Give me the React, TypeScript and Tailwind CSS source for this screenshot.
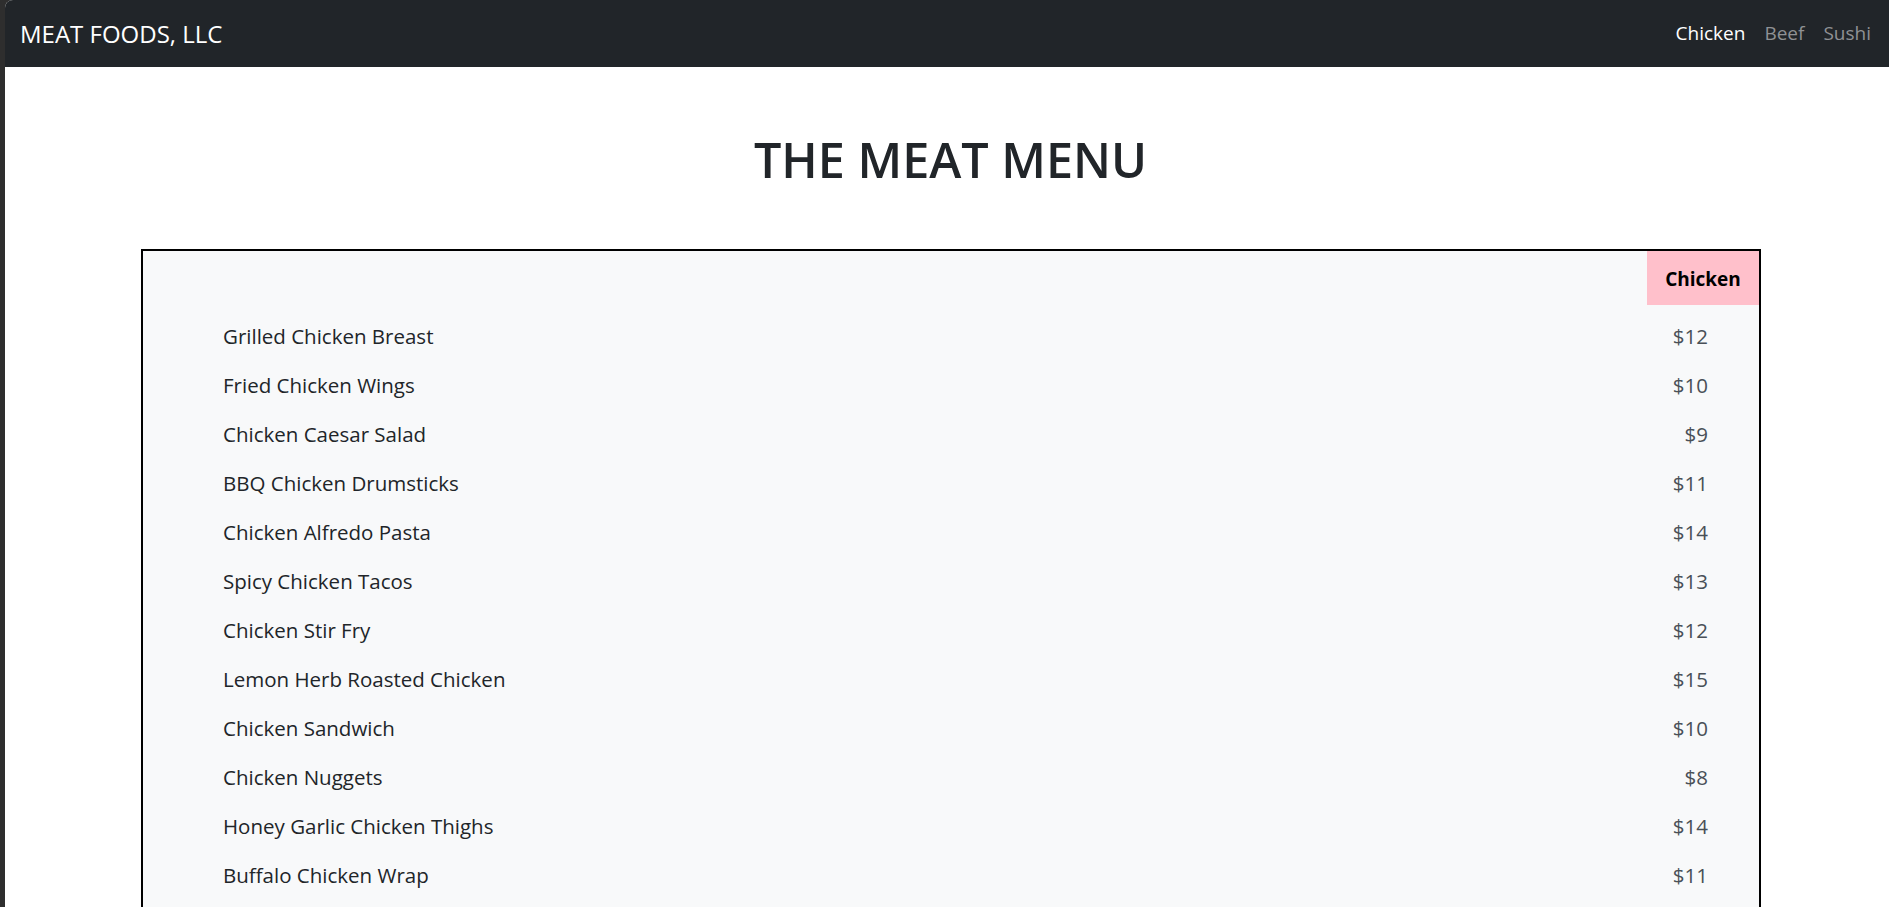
import React from "react";

const items: [string, string][] = [
  ["Grilled Chicken Breast", "$12"],
  ["Fried Chicken Wings", "$10"],
  ["Chicken Caesar Salad", "$9"],
  ["BBQ Chicken Drumsticks", "$11"],
  ["Chicken Alfredo Pasta", "$14"],
  ["Spicy Chicken Tacos", "$13"],
  ["Chicken Stir Fry", "$12"],
  ["Lemon Herb Roasted Chicken", "$15"],
  ["Chicken Sandwich", "$10"],
  ["Chicken Nuggets", "$8"],
  ["Honey Garlic Chicken Thighs", "$14"],
  ["Buffalo Chicken Wrap", "$11"],
];

export default function App() {
  return (
    <div
      className="flex min-h-screen bg-[#2e2e2e]"
      style={{ fontFamily: '"Open Sans", "Noto Sans", sans-serif' }}
    >
      <div className="w-[5px] shrink-0 bg-[#2e2e2e]" />
      <div className="flex-1 bg-white rounded-tl-[8px] overflow-hidden">
        <nav className="h-[67px] bg-[#212529] flex items-center justify-between pl-[15px] pr-[18px]">
          <span className="text-white text-[24px] leading-none">MEAT FOODS, LLC</span>
          <div className="flex items-center gap-[19px] text-[19px]">
            <span className="text-white">Chicken</span>
            <span className="text-[#8f9194]">Beef</span>
            <span className="text-[#8f9194]">Sushi</span>
          </div>
        </nav>
        <h1 className="mt-[62px] pl-[7px] text-center text-[48.5px] leading-[60px] font-semibold text-[#212529]">
          THE MEAT MENU
        </h1>
        <div className="mt-[60px] ml-[136px] w-[1620px] border-2 border-black bg-[#f8f9fa] pb-[20px]">
          <div className="flex justify-end h-[54px]">
            <div className="w-[112px] bg-[#ffc0cb] flex items-center justify-center pt-[3px] font-bold text-[19px] text-black">
              Chicken
            </div>
          </div>
          <div className="pt-[7px]">
            {items.map(([name, price]) => (
              <div
                key={name}
                className="h-[49px] flex items-center justify-between pl-[80px] pr-[51px] text-[20.5px]"
              >
                <span className="text-[#212529]">{name}</span>
                <span className="text-[#495057]">{price}</span>
              </div>
            ))}
          </div>
        </div>
      </div>
    </div>
  );
}
